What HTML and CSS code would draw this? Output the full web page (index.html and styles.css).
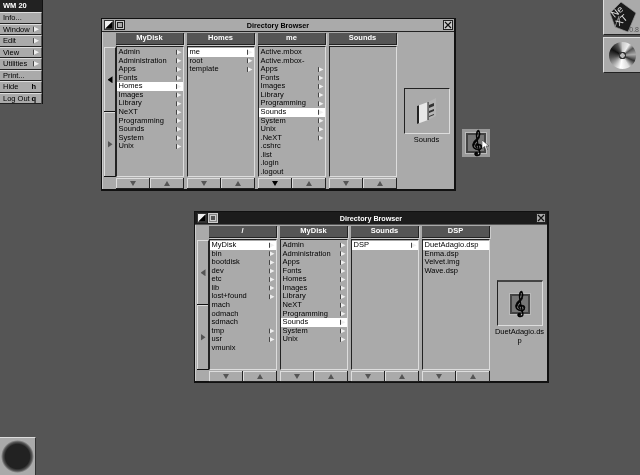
FILE: index.html
```html
<!DOCTYPE html>
<html lang="en">
<head>
<meta charset="utf-8">
<title>NeXTSTEP Workspace</title>
<link rel="stylesheet" href="styles.css">
</head>
<body>
<nav class="menu">
  <div class="menu-title">WM 20</div>
  <div class="menu-item">Info...</div>
  <div class="menu-item sub">Window</div>
  <div class="menu-item sub">Edit</div>
  <div class="menu-item sub">View</div>
  <div class="menu-item sub">Utilities</div>
  <div class="menu-item">Print...</div>
  <div class="menu-item">Hide<span class="key">h</span></div>
  <div class="menu-item">Log Out<span class="key">q</span></div>
</nav>

<section class="window win-a">
  <header class="titlebar">
    <div class="tb-btns">
      <svg class="tb-btn" viewBox="0 0 10 10"><rect width="10" height="10" fill="#333"/><path d="M1 9V1h8z" fill="#eee"/><path d="M2 8l6-6v6z" fill="#000"/></svg>
      <svg class="tb-btn" viewBox="0 0 10 10"><rect width="10" height="10" fill="#ccc"/><rect x=".5" y=".5" width="9" height="9" fill="none" stroke="#222"/><rect x="2.5" y="2.5" width="5" height="5" fill="#aaa" stroke="#222"/></svg>
    </div>
    <span class="tb-text">Directory Browser</span>
    <svg class="tb-btn" viewBox="0 0 10 10"><rect width="10" height="10" fill="#ccc"/><rect x=".5" y=".5" width="9" height="9" fill="none" stroke="#222"/><path d="M2 2l6 6M8 2L2 8" stroke="#111" stroke-width="1.2"/></svg>
  </header>
  <div class="browser">
    <div class="scroller">
      <div class="scroll-part"><i class="tri left on"></i></div>
      <div class="scroll-part"><i class="tri right"></i></div>
    </div>
    <div class="column">
      <div class="col-title">MyDisk</div>
      <ul class="list">
        <li class="sub">Admin</li><li class="sub">Administration</li><li class="sub">Apps</li><li class="sub">Fonts</li>
        <li class="sub sel">Homes</li><li class="sub">Images</li><li class="sub">Library</li><li class="sub">NeXT</li>
        <li class="sub">Programming</li><li class="sub">Sounds</li><li class="sub">System</li><li class="sub">Unix</li>
      </ul>
      <div class="col-btns"><button class="cbtn"><i class="tri down"></i></button><button class="cbtn"><i class="tri up"></i></button></div>
    </div>
    <div class="column">
      <div class="col-title">Homes</div>
      <ul class="list">
        <li class="sub sel">me</li><li class="sub">root</li><li class="sub">template</li>
      </ul>
      <div class="col-btns"><button class="cbtn"><i class="tri down"></i></button><button class="cbtn"><i class="tri up"></i></button></div>
    </div>
    <div class="column">
      <div class="col-title">me</div>
      <ul class="list">
        <li>Active.mbox</li><li>Active.mbox-</li><li class="sub">Apps</li><li class="sub">Fonts</li>
        <li class="sub">Images</li><li class="sub">Library</li><li class="sub">Programming</li><li class="sub sel">Sounds</li>
        <li class="sub">System</li><li class="sub">Unix</li><li class="sub">.NeXT</li><li>.cshrc</li>
        <li>.list</li><li>.login</li><li>.logout</li>
      </ul>
      <div class="col-btns"><button class="cbtn"><i class="tri down on"></i></button><button class="cbtn"><i class="tri up"></i></button></div>
    </div>
    <div class="column">
      <div class="col-title">Sounds</div>
      <ul class="list"></ul>
      <div class="col-btns"><button class="cbtn"><i class="tri down"></i></button><button class="cbtn"><i class="tri up"></i></button></div>
    </div>
    <div class="preview">
      <div class="well">
        <svg class="folder" viewBox="0 0 22 26">
          <path d="M1 8l11-4v18L1 26z" fill="#e8e8e8"/>
          <path d="M1 8l2-.8v18L1 26z" fill="#222"/>
          <path d="M12 4l8-4v18l-8 4z" fill="#b5b5b5"/>
          <path d="M12 4v18" stroke="#222"/>
          <path d="M13 7l5-2v3l-5 2zM13 13l5-2v2l-5 2zM13 18l5-2v1l-5 2z" fill="#333"/>
        </svg>
      </div>
      <div class="well-label">Sounds</div>
    </div>
  </div>
</section>

<section class="window win-b">
  <header class="titlebar active">
    <div class="tb-btns">
      <svg class="tb-btn" viewBox="0 0 10 10"><rect width="10" height="10" fill="#333"/><path d="M1 9V1h8z" fill="#eee"/><path d="M2 8l6-6v6z" fill="#000"/></svg>
      <svg class="tb-btn" viewBox="0 0 10 10"><rect width="10" height="10" fill="#888"/><rect x=".5" y=".5" width="9" height="9" fill="none" stroke="#ccc"/><rect x="2.5" y="2.5" width="5" height="5" fill="#555" stroke="#ccc"/></svg>
    </div>
    <span class="tb-text">Directory Browser</span>
    <svg class="tb-btn" viewBox="0 0 10 10"><rect width="10" height="10" fill="#aaa"/><rect x=".5" y=".5" width="9" height="9" fill="none" stroke="#222"/><path d="M2 2l6 6M8 2L2 8" stroke="#111" stroke-width="1.2"/></svg>
  </header>
  <div class="browser">
    <div class="scroller">
      <div class="scroll-part"><i class="tri left"></i></div>
      <div class="scroll-part"><i class="tri right"></i></div>
    </div>
    <div class="column">
      <div class="col-title">/</div>
      <ul class="list">
        <li class="sub sel">MyDisk</li><li class="sub">bin</li><li class="sub">bootdisk</li><li class="sub">dev</li>
        <li class="sub">etc</li><li class="sub">lib</li><li class="sub">lost+found</li><li>mach</li>
        <li>odmach</li><li>sdmach</li><li class="sub">tmp</li><li class="sub">usr</li><li>vmunix</li>
      </ul>
      <div class="col-btns"><button class="cbtn"><i class="tri down"></i></button><button class="cbtn"><i class="tri up"></i></button></div>
    </div>
    <div class="column">
      <div class="col-title">MyDisk</div>
      <ul class="list">
        <li class="sub">Admin</li><li class="sub">Administration</li><li class="sub">Apps</li><li class="sub">Fonts</li>
        <li class="sub">Homes</li><li class="sub">Images</li><li class="sub">Library</li><li class="sub">NeXT</li>
        <li class="sub">Programming</li><li class="sub sel">Sounds</li><li class="sub">System</li><li class="sub">Unix</li>
      </ul>
      <div class="col-btns"><button class="cbtn"><i class="tri down"></i></button><button class="cbtn"><i class="tri up"></i></button></div>
    </div>
    <div class="column">
      <div class="col-title">Sounds</div>
      <ul class="list">
        <li class="sub sel">DSP</li>
      </ul>
      <div class="col-btns"><button class="cbtn"><i class="tri down"></i></button><button class="cbtn"><i class="tri up"></i></button></div>
    </div>
    <div class="column">
      <div class="col-title">DSP</div>
      <ul class="list">
        <li class="sel">DuetAdagio.dsp</li><li>Enma.dsp</li><li>Velvet.img</li><li>Wave.dsp</li>
      </ul>
      <div class="col-btns"><button class="cbtn"><i class="tri down"></i></button><button class="cbtn"><i class="tri up"></i></button></div>
    </div>
    <div class="preview">
      <div class="well">
        <div class="sound-icon"><span class="clef">&#x1D11E;</span></div>
      </div>
      <div class="well-label">DuetAdagio.dsp</div>
    </div>
  </div>
</section>

<div class="tile-float">
  <div class="sound-icon"><span class="clef">&#x1D11E;</span></div>
  <svg class="cursor" viewBox="0 0 7 10"><path d="M0 0l7 6H4l1.500 4-1.500.5L2.500 6.500 0 8.500z" fill="#fff" stroke="#222" stroke-width=".5"/></svg>
</div>

<div class="tile tile-next">
  <svg class="next-cube" viewBox="0 0 36 36">
    <path d="M6 14L17 3l15 11-8 19-13-5z" fill="#1a1a1a" stroke="#999" stroke-width=".7"/>
    <path d="M11 28l4-11" stroke="#bbb" stroke-width=".7"/>
    <text class="cube-text" transform="translate(10.500 19) rotate(-40)">Ne</text>
    <text class="cube-text" transform="translate(15 27.500) rotate(-40)">XT</text>
  </svg>
  <span class="tile-ver">0.8</span>
</div>
<div class="tile tile-cd"><div class="cd"></div></div>
<div class="tile-dock"><div class="dock-hole"></div></div>
</body>
</html>
```
FILE: styles.css
```css
* { box-sizing: border-box; }
html, body { margin: 0; padding: 0; }
html { background: #555; }
body {
  width: 640px;
  height: 475px;
  position: relative;
  overflow: hidden;
  background: #555;
  font-family: "Liberation Sans", Arial, sans-serif;
  font-size: 7.5px;
  color: #000;
  filter: blur(0.3px);
}

/* application menu */
.menu {
  position: absolute;
  left: 0;
  top: 0;
  width: 43px;
  height: 104px;
  background: #111;
  padding-right: 1px;
  display: flex;
  flex-direction: column;
}
.menu-title {
  height: 12px;
  line-height: 11px;
  padding-left: 3px;
  background: #222;
  color: #fff;
  font-weight: bold;
}
.menu-item {
  flex: 1;
  display: flex;
  align-items: center;
  padding: 0 2px 0 3px;
  background: #aaa;
  border-top: 1px solid #ddd;
  border-bottom: 1px solid #222;
  border-right: 1px solid #555;
  white-space: nowrap;
}
.key { margin-left: auto; margin-right: 3px; font-weight: bold; }
.sub::after {
  content: "";
  margin-left: auto;
  flex: none;
  width: 5px;
  height: 6px;
  background: #eee;
  border-left: 1px solid #444;
  clip-path: polygon(0 0, 100% 50%, 0 100%);
}

/* windows */
.window {
  position: absolute;
  background: #aaa;
  border: 1px solid #111;
  border-right-width: 2px;
  border-bottom-width: 2px;
  box-shadow: inset 1px 1px 0 #ccc;
}
.win-a { left: 101px; top: 18px; width: 355px; height: 173px; }
.win-b { left: 194px; top: 211px; width: 355px; height: 172px; }

.titlebar {
  height: 13px;
  display: flex;
  align-items: center;
  justify-content: space-between;
  padding: 0 1px 0 2px;
  background: #aaa;
  border-bottom: 1px solid #222;
  color: #000;
  position: relative;
}
.titlebar.active { background: #1c1c1c; color: #fff; border-bottom-color: #555; }
.tb-btns { display: flex; gap: 1px; }
.tb-btn { width: 10px; height: 10px; display: block; }
.tb-text {
  position: absolute;
  left: 0;
  right: 0;
  text-align: center;
  font-weight: bold;
  font-size: 7.2px;
}

.browser {
  display: flex;
  padding: 1px 0 0 2px;
  height: 157px;
}
.scroller {
  width: 12px;
  flex: none;
  margin: 14px 0 12px 0;
  display: flex;
  flex-direction: column;
  border-bottom: 1px solid #111;
  border-right: 1px solid #222;
  border-top: 1px solid #ddd;
}
.scroll-part {
  flex: 1;
  display: flex;
  align-items: center;
  justify-content: center;
  border-left: 1px solid #ddd;
}
.scroll-part + .scroll-part { border-top: 1px solid #ddd; box-shadow: 0 -1px 0 #111; }

.column {
  width: 68px;
  flex: none;
  margin-right: 3px;
  display: flex;
  flex-direction: column;
}
.col-title {
  height: 11.5px;
  line-height: 10px;
  flex: none;
  background: #555;
  color: #fff;
  font-weight: bold;
  text-align: center;
  border-right: 1px solid #222;
  border-bottom: 1px solid #222;
  box-shadow: 1px 1px 0 #ccc;
}
.list {
  list-style: none;
  margin: 1.5px 0 0;
  padding: 1px 0 0;
  height: 131px;
  flex: none;
  background: #aaa;
  border: 1px solid #222;
  border-right-color: #ddd;
  border-bottom-color: #ddd;
}
.list li {
  height: 8.57px;
  line-height: 8.57px;
  padding: 0 1.500px;
  display: flex;
  align-items: center;
  white-space: nowrap;
  letter-spacing: 0.05px;
}
.list li.sel { background: #fff; color: #000; }

.col-btns {
  flex: none;
  height: 11px;
  margin-top: 1px;
  display: flex;
  gap: 1px;
  background: #222;
  border-bottom: 1px solid #222;
  border-right: 1px solid #222;
}
.cbtn {
  flex: 1;
  padding: 0;
  border: 0;
  border-top: 1px solid #ddd;
  border-left: 1px solid #ddd;
  background: #aaa;
  display: flex;
  align-items: center;
  justify-content: center;
}

/* arrows */
.tri { display: block; background: #555; }
.tri.on { background: #000; }
.tri.down { width: 6px; height: 5px; clip-path: polygon(0 0, 100% 0, 50% 100%); }
.tri.up { width: 6px; height: 5px; clip-path: polygon(50% 0, 100% 100%, 0 100%); }
.tri.left { width: 5px; height: 7px; clip-path: polygon(100% 0, 100% 100%, 0 50%); }
.tri.right { width: 5px; height: 7px; clip-path: polygon(0 0, 100% 50%, 0 100%); }

/* preview */
.preview {
  width: 53px;
  flex: none;
  display: flex;
  flex-direction: column;
  align-items: center;
  padding-top: 55px;
}
.well {
  width: 46px;
  height: 46px;
  flex: none;
  display: flex;
  align-items: center;
  justify-content: center;
  border: 1px solid #222;
  border-right-color: #ddd;
  border-bottom-color: #ddd;
}
.well-label {
  width: 50px;
  margin-top: 1px;
  text-align: center;
  line-height: 9px;
  overflow-wrap: anywhere;
}
.win-b .preview { padding-top: 54px; }
.win-b .well { border-top: 2px solid #444; }
.folder { width: 22px; height: 26px; display: block; }

/* icons */
.sound-icon {
  width: 20px;
  height: 20px;
  background: #777;
  border: 2px solid #444;
  box-shadow: 0 0 0 1px #bbb;
  display: flex;
  align-items: center;
  justify-content: center;
}
.clef {
  font-family: "DejaVu Sans", sans-serif;
  font-size: 21.500px;
  line-height: 20px;
  color: #000;
  -webkit-text-stroke: 0.7px #000;
}
.tile-float {
  position: absolute;
  left: 462px;
  top: 129px;
  width: 28px;
  height: 28px;
  background: #999;
  display: flex;
  align-items: center;
  justify-content: center;
}
.cursor {
  position: absolute;
  left: 20px;
  top: 11px;
  width: 7px;
  height: 10px;
}
.tile {
  position: absolute;
  left: 603px;
  width: 37px;
  height: 36px;
  background: #aaa;
  border-top: 1px solid #ddd;
  border-left: 1px solid #ddd;
  border-bottom: 1px solid #222;
  display: flex;
  align-items: center;
  justify-content: center;
}
.tile-next { top: -1px; }
.tile-cd { top: 37px; }
.next-cube { width: 36px; height: 36px; display: block; flex: none; }
.cube-text {
  font-family: "Liberation Sans", Arial, sans-serif;
  font-size: 9.500px;
  fill: #e0e0e0;
}
.tile-ver { position: absolute; right: 1px; bottom: 0; font-size: 7px; line-height: 8px; color: #555; }
.cd {
  width: 27px;
  height: 27px;
  border-radius: 50%;
  background:
    radial-gradient(circle, #bbb 0 2px, #333 2.5px 3.5px, transparent 4px),
    conic-gradient(#ccc, #eee 30deg, #555 55deg, #aaa 85deg, #333 115deg, #ddd 150deg, #fff 190deg, #aaa 225deg, #555 260deg, #111 300deg, #555 335deg, #ccc);
}
.tile-dock {
  position: absolute;
  left: 0;
  top: 437px;
  width: 36px;
  height: 38px;
  background: #aaa;
  border-top: 1px solid #ddd;
  border-right: 1px solid #333;
  display: flex;
  align-items: center;
  justify-content: center;
}
.dock-hole {
  width: 33px;
  height: 33px;
  border-radius: 50%;
  background: radial-gradient(closest-side, #222 74%, #555 88%, #aaa 100%);
}
```
